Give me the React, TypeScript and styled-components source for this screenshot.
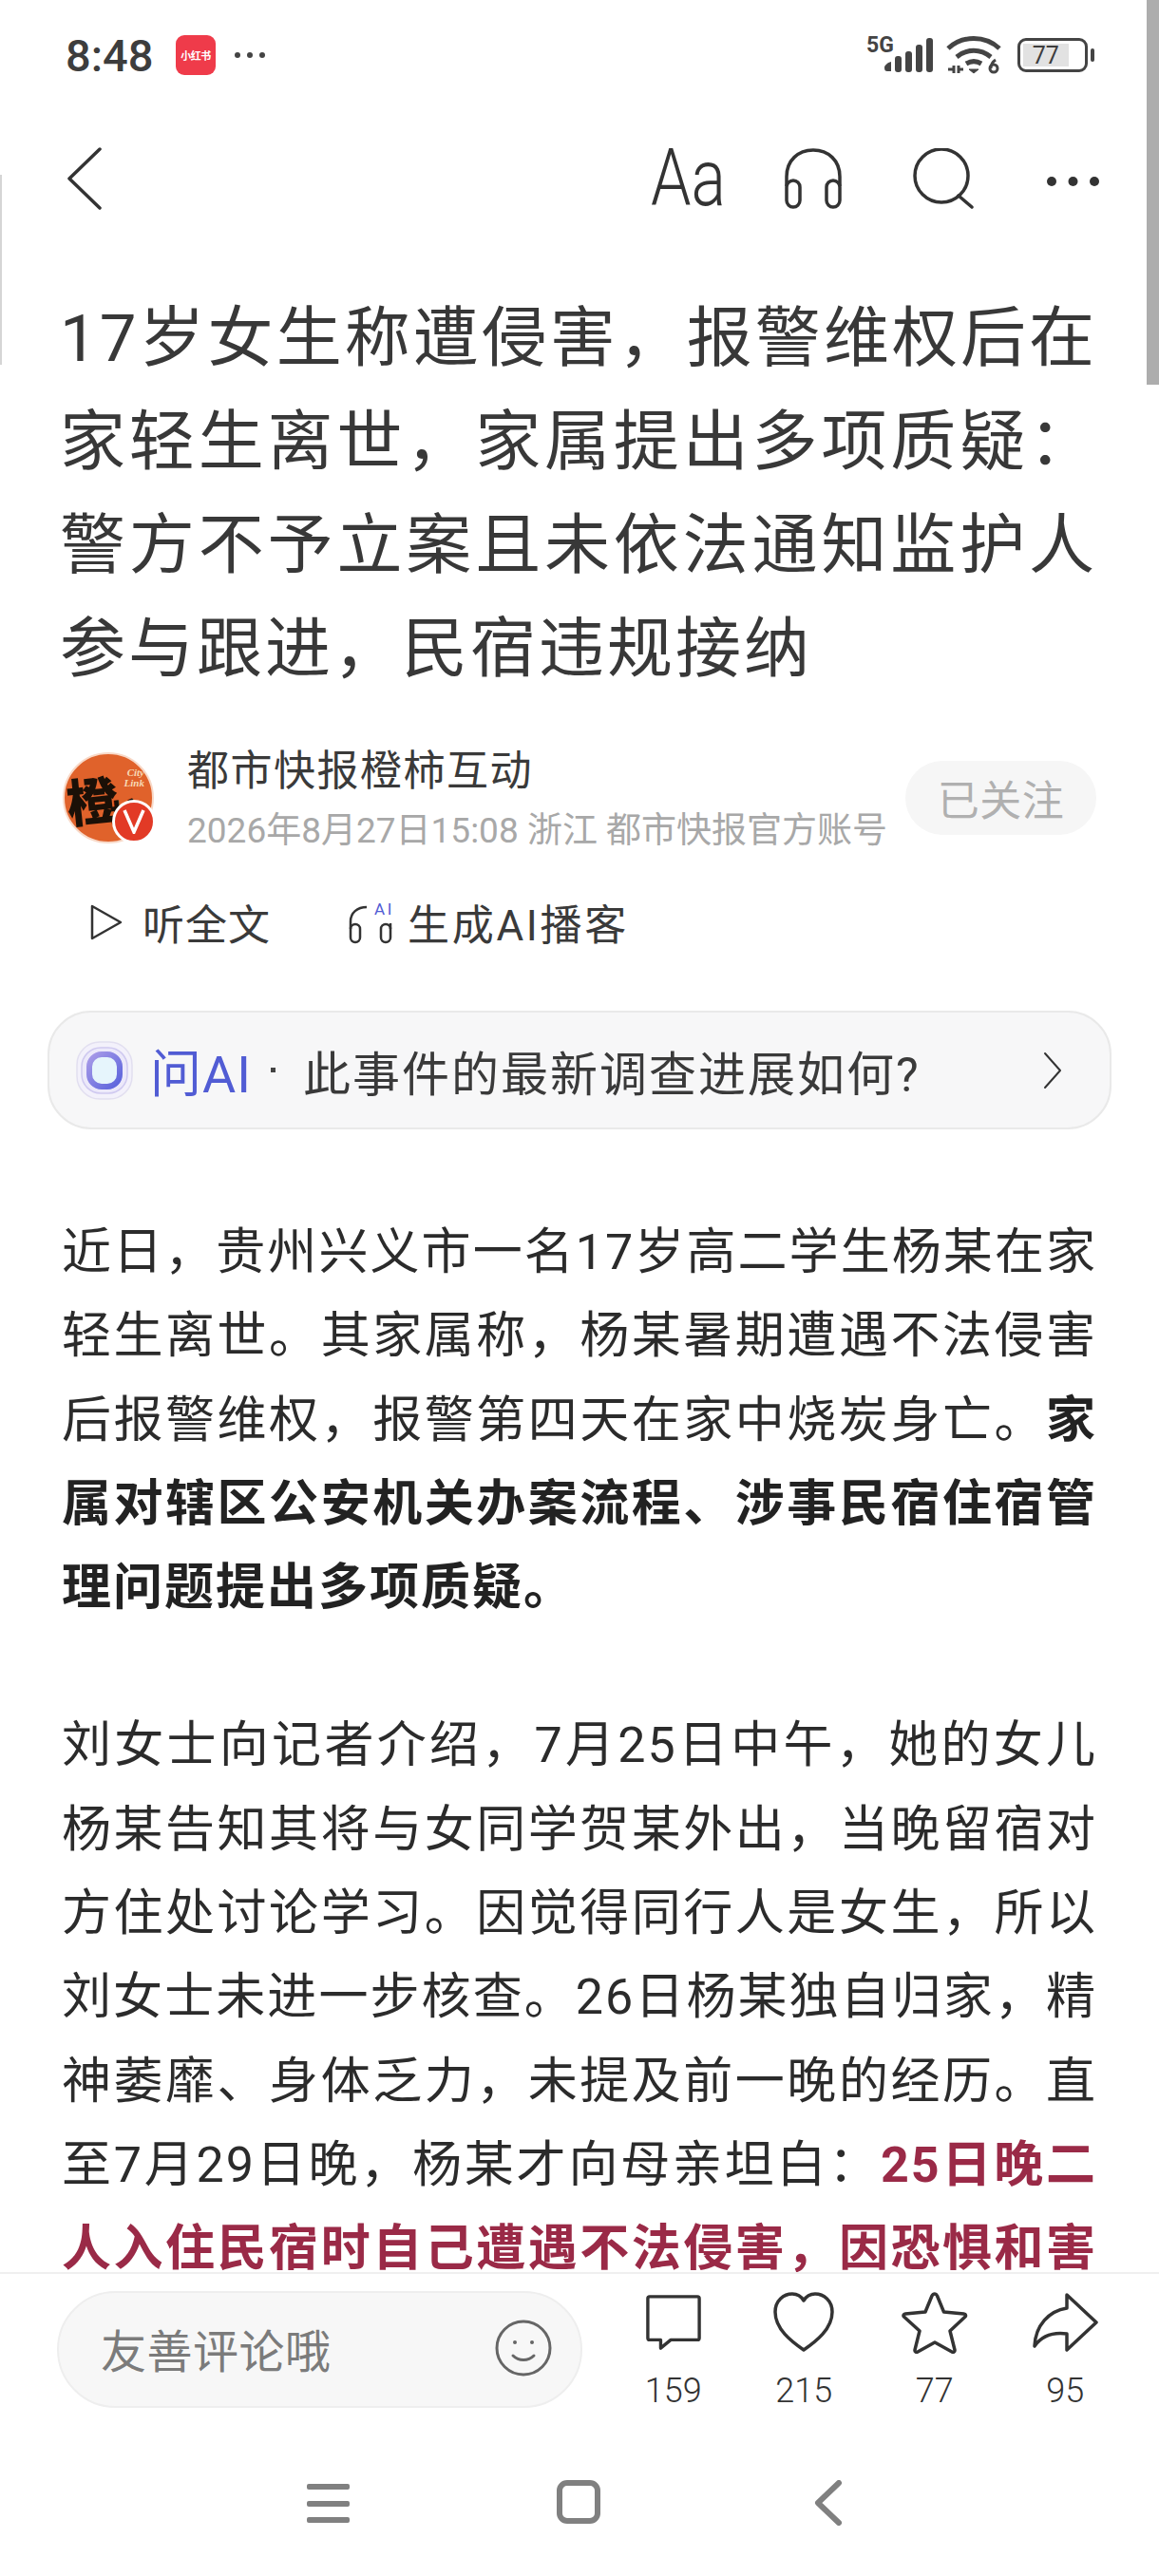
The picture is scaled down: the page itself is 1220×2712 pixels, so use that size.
import styled, { createGlobalStyle } from "styled-components";

const CJK = `Roboto, "Noto Sans CJK SC", sans-serif`;

const GlobalStyle = createGlobalStyle`
  html, body {
    margin: 0;
    padding: 0;
    background: #fff;
  }
  * {
    box-sizing: border-box;
  }
`;

const Page = styled.div`
  position: relative;
  width: 1220px;
  height: 2712px;
  display: flex;
  flex-direction: column;
  overflow: hidden;
  background: #fff;
  font-family: ${CJK};
  color: #333;
`;

const ScrollThumb = styled.div`
  position: absolute;
  top: 0;
  right: 0;
  width: 13px;
  height: 405px;
  background: #adadad;
`;

const EdgeMark = styled.div`
  position: absolute;
  top: 184px;
  left: 0;
  width: 2px;
  height: 200px;
  background: #d5d5d5;
`;

const StatusBar = styled.div`
  flex: none;
  height: 116px;
  padding: 0 68px 0 69px;
  display: flex;
  align-items: center;
  justify-content: space-between;
`;

const StatusLeft = styled.div`
  display: flex;
  align-items: center;
`;

const Clock = styled.span`
  font-family: Roboto, sans-serif;
  font-size: 47px;
  font-weight: 500;
  color: #3d3d3d;
  width: 116px;
`;

const AppBadge = styled.div`
  width: 42px;
  height: 42px;
  border-radius: 9px;
  background: #ef3b4a;
  color: #fff;
  display: flex;
  align-items: center;
  justify-content: center;
  font-size: 11px;
  font-weight: 700;
  letter-spacing: -0.5px;
  white-space: nowrap;
`;

const StatusDots = styled.svg`
  margin-left: 19px;
`;

const StatusRight = styled.div`
  display: flex;
  align-items: center;
`;

const NetLabel = styled.span`
  position: absolute;
  top: 36px;
  left: 912px;
  font-family: Roboto, sans-serif;
  font-size: 23px;
  line-height: 24px;
  font-weight: 700;
  color: #444;
`;

const Battery = styled.div`
  width: 74px;
  height: 36px;
  border: 3.5px solid #444;
  border-radius: 9px;
  padding: 3px;
  display: flex;
  position: relative;
`;

const BatteryFill = styled.div`
  width: 77%;
  background: #e2e2e2;
  display: flex;
  align-items: center;
  justify-content: center;
  font-family: Roboto, sans-serif;
  font-size: 25px;
  color: #3d3d3d;
`;

const BatteryNub = styled.div`
  width: 4px;
  height: 14px;
  margin-left: 3px;
  border-radius: 2px;
  background: #444;
`;

const NavBar = styled.div`
  flex: none;
  height: 144px;
  padding: 0 62px 0 71px;
  display: flex;
  align-items: center;
  justify-content: space-between;
`;

const NavActions = styled.div`
  display: flex;
  align-items: center;
`;

const FontSizeLabel = styled.span`
  width: 76px;
  margin-left: -3px;
  margin-right: 65px;
  font-family: Roboto, sans-serif;
  font-size: 84px;
  line-height: 84px;
  font-weight: 300;
  color: #333;
  white-space: nowrap;
  transform: scaleX(0.81);
  transform-origin: left center;
`;

const NavIcon = styled.svg<{ $gap?: number; $drop?: number }>`
  display: block;
  margin-right: ${(p) => p.$gap ?? 0}px;
  margin-top: ${(p) => p.$drop ?? 0}px;
`;

const Article = styled.div`
  flex: 1;
  min-height: 0;
  overflow: hidden;
  padding: 40px 65px 0 65px;
`;

const TitleBlock = styled.div`
  margin: 2px 0 -2px -2px;
`;

const TitleLine = styled.div<{ $last?: boolean }>`
  font-size: 69px;
  line-height: 109px;
  letter-spacing: 3px;
  color: #383838;
  white-space: nowrap;
  text-align: justify;
  text-align-last: ${(p) => (p.$last ? "left" : "justify")};
`;

const AuthorRow = styled.div`
  margin-top: 52px;
  display: flex;
  align-items: center;
  height: 104px;
`;

const Avatar = styled.div`
  position: relative;
  flex: none;
  width: 96px;
  height: 96px;
  margin-left: 1px;
`;

const AvatarCircle = styled.div`
  width: 96px;
  height: 96px;
  border-radius: 50%;
  overflow: hidden;
  background: #e0622b;
  border: 2px solid #f8d9c8;
  color: #1b1007;
  position: relative;
`;

const AvatarGlyph = styled.span<{ $x: number; $y: number; $size: number }>`
  position: absolute;
  left: ${(p) => p.$x}px;
  top: ${(p) => p.$y}px;
  font-family: "Noto Sans CJK SC", sans-serif;
  font-size: ${(p) => p.$size}px;
  line-height: 1;
  font-weight: 900;
  transform: rotate(-6deg);
`;

const AvatarLink = styled.span`
  position: absolute;
  right: 8px;
  top: 14px;
  width: 30px;
  font-family: "Liberation Serif", serif;
  font-size: 11px;
  line-height: 11px;
  font-style: italic;
  font-weight: 700;
  text-align: right;
  color: #f7d9b5;
`;

const VerifiedBadge = styled.div`
  position: absolute;
  right: -2px;
  bottom: 0;
  width: 46px;
  height: 46px;
  border-radius: 50%;
  border: 3px solid #fff;
  background: #e23a26;
  color: #fff;
  display: flex;
  align-items: center;
  justify-content: center;
`;

const AuthorInfo = styled.div`
  flex: 1;
  margin-left: 35px;
  min-width: 0;
`;

const AuthorName = styled.div`
  font-size: 44px;
  line-height: 56px;
  letter-spacing: 1.5px;
  color: #3a3a3a;
  white-space: nowrap;
`;

const AuthorMeta = styled.div`
  margin-top: 13px;
  font-size: 37px;
  line-height: 44px;
  color: #a8a8a8;
  white-space: nowrap;
`;

const FollowPill = styled.div`
  flex: none;
  width: 201px;
  height: 78px;
  margin-right: 1px;
  border-radius: 39px;
  background: #f6f6f6;
  color: #b0b0b0;
  font-size: 44px;
  letter-spacing: 0.5px;
  display: flex;
  align-items: center;
  justify-content: center;
`;

const ListenRow = styled.div`
  margin-top: 49px;
  height: 60px;
  padding-left: 30px;
  display: flex;
  align-items: center;
`;

const ListenItem = styled.div<{ $gap: number; $width: number; $spacing: number }>`
  display: flex;
  align-items: center;
  gap: ${(p) => p.$gap}px;
  width: ${(p) => p.$width}px;
  font-size: 44px;
  letter-spacing: ${(p) => p.$spacing}px;
  color: #3a3a3a;
  white-space: nowrap;
`;

const AskCard = styled.div`
  margin: 63px -15px 0 -15px;
  height: 125px;
  border: 2px solid #e9e9e9;
  border-radius: 46px;
  background: #f7f7f8;
  padding: 0 50px 0 28px;
  display: flex;
  align-items: center;
`;

const AskLabel = styled.span`
  margin-left: 18px;
  font-size: 54px;
  letter-spacing: 1px;
  color: #515cd4;
  white-space: nowrap;
`;

const AskDot = styled.span`
  width: 5px;
  height: 5px;
  margin: 0 29px 0 20px;
  background: #444;
`;

const AskText = styled.span`
  flex: 1;
  font-size: 50px;
  letter-spacing: 2px;
  color: #3a3a3a;
  white-space: nowrap;
`;

const Body = styled.div`
  margin-top: 86px;
`;

const Paragraph = styled.div`
  margin-bottom: 78px;
`;

const BodyLine = styled.div<{ $last?: boolean }>`
  font-size: 52px;
  line-height: 88.3px;
  letter-spacing: 2px;
  color: #2b2b2b;
  white-space: nowrap;
  text-align: justify;
  text-align-last: ${(p) => (p.$last ? "left" : "justify")};
`;

const Strong = styled.span`
  font-weight: 700;
  color: #222;
`;

const Accent = styled.span`
  font-weight: 700;
  color: #9a2a47;
`;

const BottomBar = styled.div`
  flex: none;
  height: 320px;
  border-top: 2px solid #efefef;
  background: #fff;
  display: flex;
  flex-direction: column;
`;

const ActionRow = styled.div`
  display: flex;
  align-items: flex-start;
  padding: 18px 0 0 60px;
`;

const CommentInput = styled.div`
  width: 553px;
  height: 123px;
  border: 2px solid #eeeeee;
  border-radius: 62px;
  background: #f7f7f7;
  padding: 0 30px 4px 44px;
  display: flex;
  align-items: center;
  justify-content: space-between;
  font-size: 48px;
  letter-spacing: 0.5px;
  color: #7b7b7b;
`;

const Stats = styled.div`
  margin-left: 27px;
  display: flex;
`;

const Stat = styled.div`
  width: 137.5px;
  display: flex;
  flex-direction: column;
  align-items: center;
`;

const StatIconBox = styled.div`
  height: 66px;
  display: flex;
  align-items: center;
  justify-content: center;
`;

const StatCount = styled.span`
  margin-top: 19px;
  font-family: Roboto, sans-serif;
  font-size: 36px;
  line-height: 40px;
  font-weight: 300;
  color: #333;
`;

const SystemNav = styled.div`
  flex: 1;
  display: flex;
  align-items: flex-start;
  padding: 74px 0 0 323px;
`;

const MenuIcon = styled.div`
  width: 45px;
  height: 41px;
  margin-top: 4px;
  margin-right: 218px;
  display: flex;
  flex-direction: column;
  justify-content: space-between;
`;

const MenuBar = styled.div`
  height: 6px;
  border-radius: 2px;
  background: #808080;
`;

const HomeIcon = styled.div`
  width: 46px;
  height: 46px;
  margin-right: 225px;
  border: 6px solid #808080;
  border-radius: 11px;
`;

const paragraphOne = [
  <>近日，贵州兴义市一名17岁高二学生杨某在家</>,
  <>轻生离世。其家属称，杨某暑期遭遇不法侵害</>,
  <>
    后报警维权，报警第四天在家中烧炭身亡。<Strong>家</Strong>
  </>,
  <Strong>属对辖区公安机关办案流程、涉事民宿住宿管</Strong>,
  <Strong>理问题提出多项质疑。</Strong>,
];

const paragraphTwo = [
  <>刘女士向记者介绍，7月25日中午，她的女儿</>,
  <>杨某告知其将与女同学贺某外出，当晚留宿对</>,
  <>方住处讨论学习。因觉得同行人是女生，所以</>,
  <>刘女士未进一步核查。26日杨某独自归家，精</>,
  <>神萎靡、身体乏力，未提及前一晚的经历。直</>,
  <>
    至7月29日晚，杨某才向母亲坦白：<Accent>25日晚二</Accent>
  </>,
  <Accent>人入住民宿时自己遭遇不法侵害，因恐惧和害</Accent>,
];

const titleLines = [
  "17岁女生称遭侵害，报警维权后在",
  "家轻生离世，家属提出多项质疑：",
  "警方不予立案且未依法通知监护人",
  "参与跟进，民宿违规接纳",
];

const stats = [
  {
    count: "159",
    icon: (
      <svg width="60" height="60" viewBox="0 0 62 62" fill="none" stroke="#333" strokeWidth="3.5" strokeLinejoin="round" strokeLinecap="round">
        <path d="M5 3h52a2 2 0 0 1 2 2v43a2 2 0 0 1-2 2H28l-11 9v-9H5a2 2 0 0 1-2-2V5a2 2 0 0 1 2-2z" />
      </svg>
    ),
  },
  {
    count: "215",
    icon: (
      <svg width="66" height="64" viewBox="0 0 66 64" fill="none" stroke="#333" strokeWidth="3.5" strokeLinejoin="round">
        <path d="M33 61C20 52 3 39 3 21 3 9 12 2 21 2c5 0 9 2 12 7 3-5 7-7 12-7 9 0 18 7 18 19 0 18-17 31-30 40z" />
      </svg>
    ),
  },
  {
    count: "77",
    icon: (
      <svg width="70" height="66" viewBox="0 0 70 66" fill="none" stroke="#333" strokeWidth="3.5" strokeLinejoin="round">
        <path d="M35 3c1 0 2 1 2.500 2l7 17 21 2c2 .3 2.500 2 1.500 3L51 42l5 20c.3 2-1.500 3-3 2L35 54 17 64c-1.500 1-3.300 0-3-2l5-20L2.500 27c-1-1-.5-2.700 1.500-3l21-2 7-17c.5-1 1.500-2 3-2z" />
      </svg>
    ),
  },
  {
    count: "95",
    icon: (
      <svg width="70" height="64" viewBox="0 0 70 64" fill="none" stroke="#333" strokeWidth="3.5" strokeLinejoin="round" strokeLinecap="round">
        <path d="M37 3l31 29-31 29V44c-15-2-27 3-34 13 1-22 15-37 34-40z" />
      </svg>
    ),
  },
];

export default function App() {
  return (
    <Page>
      <GlobalStyle />
      <StatusBar>
        <StatusLeft>
          <Clock>8:48</Clock>
          <AppBadge>小红书</AppBadge>
          <StatusDots width="34" height="8" viewBox="0 0 34 8" fill="#444">
            <circle cx="4" cy="4" r="3" />
            <circle cx="17" cy="4" r="3" />
            <circle cx="30" cy="4" r="3" />
          </StatusDots>
        </StatusLeft>
        <NetLabel>5G</NetLabel>
        <StatusRight>
          <svg width="52" height="36" viewBox="0 0 52 36" fill="#444">
            <path d="M0 31c0-2 3-5 7-6v10H3c-2 0-3-1-3-4z" />
            <rect x="11" y="19" width="7" height="17" rx="3" />
            <rect x="22" y="14" width="7" height="22" rx="3" />
            <rect x="33" y="7" width="7" height="29" rx="3" />
            <rect x="44" y="0" width="7" height="36" rx="3" />
          </svg>
          <svg width="58" height="40" viewBox="0 0 58 40" fill="none" stroke="#444" strokeWidth="5" style={{ margin: "0 17px 0 13px" }}>
            <path d="M2 13C17-1 41-1 56 13" />
            <path d="M11 22c11-9 25-9 36 0" />
            <path d="M21 29c5-3 11-3 16 0" />
            <path d="M24 35h10l-5 4z" fill="#444" strokeWidth="1" />
            <path d="M2 35h6M8 31v8M13 31v8M13 35h5" strokeWidth="3" />
            <circle cx="50" cy="34" r="4" strokeWidth="3" />
            <path d="M47 34c0-4 2-7 5-9" strokeWidth="3" />
          </svg>
          <Battery>
            <BatteryFill>77</BatteryFill>
          </Battery>
          <BatteryNub />
        </StatusRight>
      </StatusBar>

      <NavBar>
        <NavIcon width="36" height="66" viewBox="0 0 36 66" fill="none" stroke="#333" strokeWidth="3.5" strokeLinecap="round" strokeLinejoin="round">
          <path d="M34 2L2 33l32 31" />
        </NavIcon>
        <NavActions>
          <FontSizeLabel>Aa</FontSizeLabel>
          <NavIcon $gap={75} width="60" height="64" viewBox="0 0 60 64" fill="none" stroke="#333" strokeWidth="3.5" strokeLinejoin="round">
            <path d="M2 40V30C2 13 14 2 30 2s28 11 28 28v10" />
            <rect x="2" y="34" width="14" height="28" rx="7" />
            <rect x="44" y="34" width="14" height="28" rx="7" />
          </NavIcon>
          <NavIcon $gap={76} width="64" height="64" viewBox="0 0 64 64" fill="none" stroke="#333" strokeWidth="3.5" strokeLinecap="round">
            <circle cx="30" cy="29" r="28" />
            <path d="M48 50l14 12" />
          </NavIcon>
          <NavIcon $drop={6} width="57" height="12" viewBox="0 0 57 12" fill="#333">
            <circle cx="6" cy="6" r="5" />
            <circle cx="28.500" cy="6" r="5" />
            <circle cx="51" cy="6" r="5" />
          </NavIcon>
        </NavActions>
      </NavBar>

      <Article>
        <TitleBlock>
          {titleLines.map((line, i) => (
            <TitleLine key={line} $last={i === titleLines.length - 1}>
              {line}
            </TitleLine>
          ))}
        </TitleBlock>

        <AuthorRow>
          <Avatar>
            <AvatarCircle>
              <AvatarGlyph $x={2} $y={20} $size={54}>橙</AvatarGlyph>
              <AvatarGlyph $x={48} $y={44} $size={36}>柿</AvatarGlyph>
              <AvatarLink>City Link</AvatarLink>
            </AvatarCircle>
            <VerifiedBadge>
              <svg width="24" height="26" viewBox="0 0 24 26" fill="none" stroke="#fff" strokeWidth="3.5">
                <path d="M2 1l10 23L22 1" />
              </svg>
            </VerifiedBadge>
          </Avatar>
          <AuthorInfo>
            <AuthorName>都市快报橙柿互动</AuthorName>
            <AuthorMeta>2026年8月27日15:08 浙江 都市快报官方账号</AuthorMeta>
          </AuthorInfo>
          <FollowPill>已关注</FollowPill>
        </AuthorRow>

        <ListenRow>
          <ListenItem $gap={21} $width={272} $spacing={1}>
            <svg width="34" height="38" viewBox="0 0 34 38" fill="none" stroke="#333" strokeWidth="2.500" strokeLinejoin="round">
              <path d="M2 2l30 17L2 36z" />
            </svg>
            听全文
          </ListenItem>
          <ListenItem $gap={15} $width={320} $spacing={2.7}>
            <svg width="47" height="46" viewBox="0 0 47 46" fill="none" stroke="#333" strokeWidth="2.500" strokeLinejoin="round">
              <path d="M2 30v-8C2 13 9 7 19 7" />
              <rect x="2" y="25" width="10" height="19" rx="5" />
              <rect x="34" y="25" width="10" height="19" rx="5" />
              <path d="M44 30v-6" />
              <text x="27" y="15" fontFamily="Roboto, sans-serif" fontSize="17" fill="#515cd4" stroke="none">AI</text>
            </svg>
            生成AI播客
          </ListenItem>
        </ListenRow>

        <AskCard>
          <svg width="60" height="62" viewBox="0 0 60 62" fill="none">
            <defs>
              <linearGradient id="askRing" x1="0" y1="0" x2="1" y2="1">
                <stop offset="0" stopColor="#a99be8" />
                <stop offset="1" stopColor="#5a63dc" />
              </linearGradient>
            </defs>
            <rect x="1" y="1" width="58" height="60" rx="24" fill="#f3f1fb" stroke="#e2dff0" strokeWidth="1.500" />
            <rect x="6" y="7" width="48" height="48" rx="20" fill="#ece9fa" stroke="#cfc9f0" strokeWidth="1.500" />
            <rect x="14" y="14" width="32" height="34" rx="13" fill="#e6f5fc" stroke="url(#askRing)" strokeWidth="6" />
          </svg>
          <AskLabel>问AI</AskLabel>
          <AskDot />
          <AskText>此事件的最新调查进展如何?</AskText>
          <svg width="22" height="40" viewBox="0 0 22 40" fill="none" stroke="#333" strokeWidth="2" strokeLinecap="round" strokeLinejoin="round">
            <path d="M4 2l16 18L4 38" />
          </svg>
        </AskCard>

        <Body>
          <Paragraph>
            {paragraphOne.map((line, i) => (
              <BodyLine key={i} $last={i === paragraphOne.length - 1}>
                {line}
              </BodyLine>
            ))}
          </Paragraph>
          <Paragraph>
            {paragraphTwo.map((line, i) => (
              <BodyLine key={i}>{line}</BodyLine>
            ))}
          </Paragraph>
        </Body>
      </Article>

      <BottomBar>
        <ActionRow>
          <CommentInput>
            友善评论哦
            <svg width="60" height="60" viewBox="0 0 60 60" fill="none" stroke="#666" strokeWidth="3" strokeLinecap="round">
              <circle cx="30" cy="30" r="28" />
              <circle cx="21" cy="24" r="2" fill="#666" stroke="none" />
              <circle cx="39" cy="24" r="2" fill="#666" stroke="none" />
              <path d="M19 38c6 6 16 6 22 0" />
            </svg>
          </CommentInput>
          <Stats>
            {stats.map((stat) => (
              <Stat key={stat.count}>
                <StatIconBox>{stat.icon}</StatIconBox>
                <StatCount>{stat.count}</StatCount>
              </Stat>
            ))}
          </Stats>
        </ActionRow>
        <SystemNav>
          <MenuIcon>
            <MenuBar />
            <MenuBar />
            <MenuBar />
          </MenuIcon>
          <HomeIcon />
          <svg width="30" height="48" viewBox="0 0 30 48" fill="none" stroke="#808080" strokeWidth="6" strokeLinecap="round" strokeLinejoin="round">
            <path d="M26 3L4 24l22 21" />
          </svg>
        </SystemNav>
      </BottomBar>

      <ScrollThumb />
      <EdgeMark />
    </Page>
  );
}
